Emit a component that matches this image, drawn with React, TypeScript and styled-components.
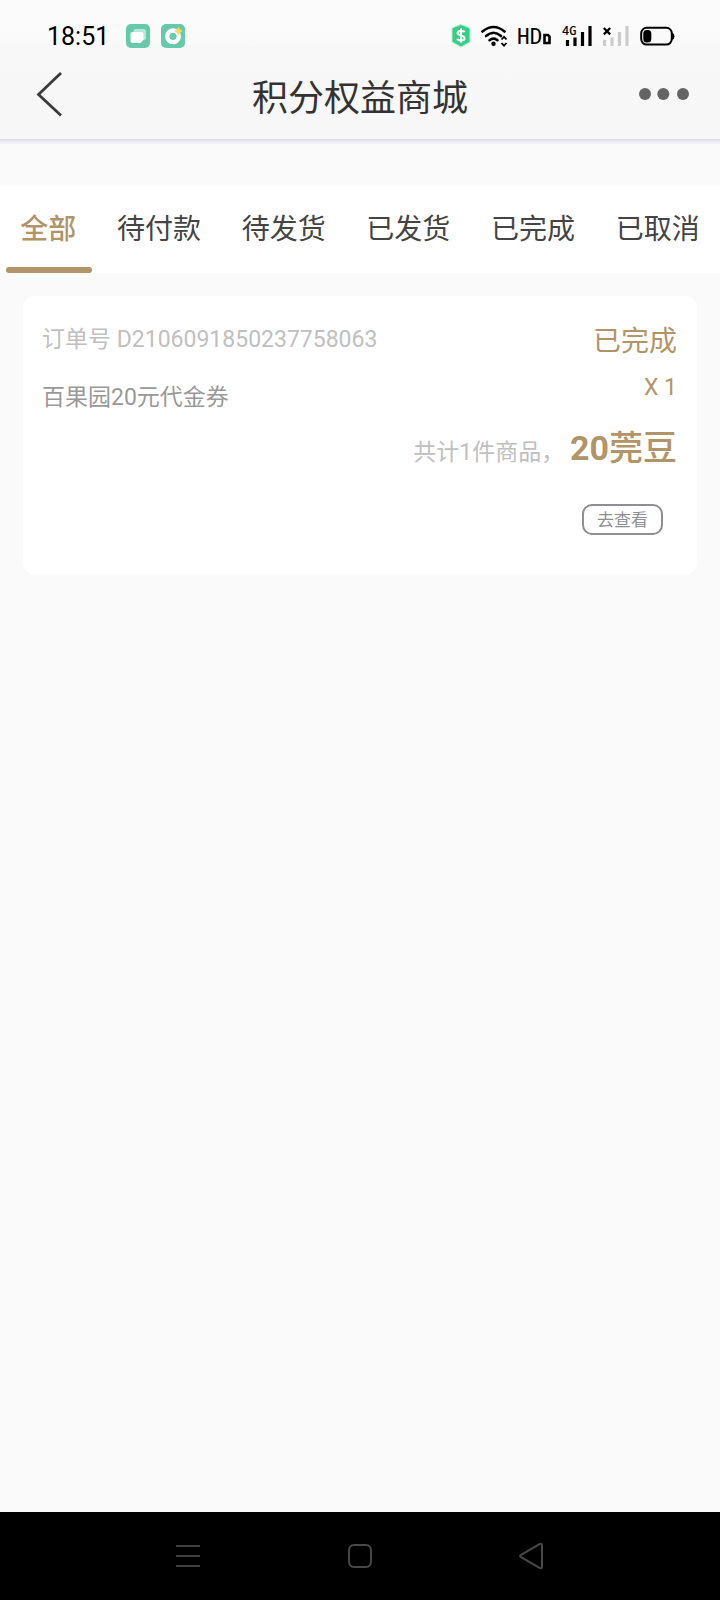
import React from "react";
import styled, { createGlobalStyle } from "styled-components";

const gold = "#b19467";

const GlobalStyle = createGlobalStyle`
  *, *::before, *::after { box-sizing: border-box; }
  body {
    margin: 0;
    background: #fafafa;
    font-family: Roboto, "Noto Sans CJK SC", sans-serif;
  }
  button { font: inherit; border: 0; padding: 0; background: none; cursor: pointer; }
  h1, p { margin: 0; font-weight: 400; }
  svg { display: block; flex: none; }
`;

const Screen = styled.div`
  display: flex;
  flex-direction: column;
  min-height: 100vh;
`;

const TopArea = styled.header`
  background: linear-gradient(#fbfbfb, #fafafa 45px, #f8f8f8 45px, #f7f7f7);
`;

const StatusBar = styled.div`
  display: flex;
  align-items: center;
  justify-content: space-between;
  padding: 24px 45px 0 47px;
  height: 48px;
  color: #000;
`;

const StatusGroup = styled.div<{ $gap: number }>`
  display: flex;
  align-items: center;
  gap: ${(p) => p.$gap}px;
`;

const Clock = styled.span`
  padding-top: 2px;
  font-size: 25px;
  line-height: 24px;
  margin-right: 6px;
`;

const TitleBar = styled.div`
  display: grid;
  grid-template-columns: 1fr auto 1fr;
  align-items: center;
  height: 91px;
  padding: 0 31px;
`;

const Title = styled.h1`
  padding-top: 10px;
  font-size: 36px;
  line-height: 48px;
  color: #333;
`;

const IconButton = styled.button<{ $end?: boolean }>`
  justify-self: ${(p) => (p.$end ? "end" : "start")};
`;

const BackButton = styled(IconButton)`
  padding-left: 5px;
`;

const HeaderShadow = styled.div`
  height: 5px;
  background: linear-gradient(#dad9de, #efeef4 60%, #f3f2f8);
`;

const Tabs = styled.nav`
  display: flex;
  height: 88px;
  margin-top: 41px;
  background: #fff;
`;

const Tab = styled.button<{ $active?: boolean }>`
  position: relative;
  flex: 1 1 auto;
  padding-top: 2px;
  font-size: 28px;
  line-height: 40px;
  white-space: nowrap;
  color: ${(p) => (p.$active ? gold : "#444")};
  font-weight: ${(p) => (p.$active ? 500 : 400)};

  &::after {
    content: "";
    display: ${(p) => (p.$active ? "block" : "none")};
    position: absolute;
    left: 6px;
    right: 5px;
    bottom: 0;
    height: 6px;
    border-radius: 3px;
    background: ${gold};
  }
`;

const Content = styled.main`
  flex: 1;
  padding: 23px;
`;

const Card = styled.article`
  padding: 21px 20px 40px 19px;
  border-radius: 12px;
  background: #fff;
`;

const CardTop = styled.div`
  display: flex;
  justify-content: space-between;
`;

const Column = styled.div<{ $end?: boolean }>`
  display: flex;
  flex-direction: column;
  align-items: ${(p) => (p.$end ? "flex-end" : "flex-start")};
  gap: ${(p) => (p.$end ? 0 : 12)}px;
  padding-top: ${(p) => (p.$end ? 2 : 0)}px;
`;

const Line = styled.p<{ $color: string; $large?: boolean }>`
  font-size: ${(p) => (p.$large ? 28 : 23)}px;
  line-height: 46px;
  color: ${(p) => p.$color};
`;

const Total = styled.p`
  padding-top: 4px;
  text-align: right;
  font-size: 23px;
  line-height: 56px;
  color: #c0c0c0;
`;

const Price = styled.strong`
  font-size: 34px;
  line-height: 40px;
  font-weight: 700;
  color: ${gold};
`;

const Unit = styled.span`
  font-weight: 500;
`;

const Actions = styled.div`
  display: flex;
  justify-content: flex-end;
  margin-top: 23px;
  padding-right: 14px;
`;

const ViewButton = styled.button`
  height: 31px;
  padding: 2px 13px 0;
  border: 2px solid #8e8e93;
  border-radius: 10px;
  font-size: 17px;
  line-height: 25px;
  color: #8e8e93;
`;

const SystemNav = styled.footer`
  display: flex;
  align-items: center;
  justify-content: center;
  gap: 146px;
  height: 88px;
  background: #000;
`;

const indicatorFont = '"DejaVu Sans Mono", monospace';

const CardsAppIcon = () => (
  <svg width="24" height="24" viewBox="0 0 24 24">
    <rect width="24" height="24" rx="5" fill="#65c9aa" />
    <rect x="7.500" y="5" width="12.500" height="11" rx="2" fill="#b8e8d8" />
    <path d="M6.500 8H15.500Q17.500 8 17.500 10V16L14.500 19H6.500Q4.500 19 4.500 17V10Q4.500 8 6.500 8Z" fill="#fff" />
  </svg>
);

const RingAppIcon = () => (
  <svg width="24" height="24" viewBox="0 0 24 24">
    <rect width="24" height="24" rx="5" fill="#65c9aa" />
    <circle cx="12" cy="12.300" r="5.800" fill="none" stroke="#fff" strokeWidth="4.400" />
    <path d="M17.500 3.500L18.700 5.800L21 7L18.700 8.200L17.500 10.500L16.300 8.200L14 7L16.300 5.800Z" fill="#f5dc52" stroke="#f5dc52" />
  </svg>
);

const ShieldIcon = () => (
  <svg width="20" height="24" viewBox="0 0 20 24">
    <path d="M10 .5L19 4V18L10 23L1 18V4Z" fill="#36cf86" stroke="#b9efd5" />
    <path d="M13.600 8.200C13 6.600 6.600 5.900 6.600 9C6.600 12.200 13.600 10.700 13.600 14.200C13.600 17.400 7 17 6.300 14.700M10 4.500V18.500" fill="none" stroke="#fff" strokeWidth="2" />
  </svg>
);

const WifiIcon = () => (
  <svg width="27" height="22" viewBox="0 0 27 22">
    <g fill="none" stroke="#000" strokeWidth="2.600" strokeLinecap="round">
      <path d="M1.500 6.500Q12.500 -2.500 23.500 6.500" />
      <path d="M5 11Q12.500 4.500 20 11" />
      <path d="M8.500 15.200Q12.500 12 16.500 15.200" />
    </g>
    <circle cx="12.500" cy="18.800" r="2.200" />
    <path d="M20.500 14.500L23 11.800L25.500 14.500M20.500 18L23 20.700L25.500 18" fill="none" stroke="#000" strokeWidth="1.800" />
  </svg>
);

const HdIcon = () => (
  <svg width="34" height="30" viewBox="0 -4 34 30">
    <text x="-1" y="19" fontFamily={indicatorFont} fontSize="21">HD</text>
    <path d="M26.500 10H30L31.500 11.500V18H26.500Z" fill="none" stroke="#000" strokeWidth="2.600" />
  </svg>
);

const Bars = ({ color }: { color: string }) => (
  <g stroke={color} strokeWidth="3.200">
    <path d="M5.500 15V21M13 12.500V21M20.500 7V21M28 1V21" />
  </g>
);

const SignalIcon = () => (
  <svg width="30" height="30" viewBox="0 -4 30 30">
    <text x="0" y="10" fontFamily={indicatorFont} fontSize="12" stroke="#000" strokeWidth=".2">4G</text>
    <Bars color="#000" />
  </svg>
);

const NoSignalIcon = () => (
  <svg width="28" height="22" viewBox="3 0 28 22">
    <Bars color="#cbcbcb" />
    <path d="M4.800 3L11.200 9.400M11.200 3L4.800 9.400" stroke="#000" strokeWidth="2.200" />
  </svg>
);

const BatteryIcon = () => (
  <svg width="35" height="20" viewBox="0 0 35 20">
    <rect x="1.200" y="1.800" width="30.600" height="16.800" rx="5.500" fill="none" stroke="#000" strokeWidth="2" />
    <rect x="3.300" y="4" width="8" height="12.400" rx="3.500" />
    <path d="M32 6.500Q34.500 7.500 34.500 10.200T32 14Z" />
  </svg>
);

const tabs = ["全部", "待付款", "待发货", "已发货", "已完成", "已取消"];

export default function App() {
  return (
    <Screen>
      <GlobalStyle />
      <TopArea>
        <StatusBar>
          <StatusGroup $gap={11}>
            <Clock>18:51</Clock>
            <CardsAppIcon />
            <RingAppIcon />
          </StatusGroup>
          <StatusGroup $gap={10}>
            <ShieldIcon />
            <WifiIcon />
            <HdIcon />
            <SignalIcon />
            <NoSignalIcon />
            <BatteryIcon />
          </StatusGroup>
        </StatusBar>
        <TitleBar>
          <BackButton aria-label="返回">
            <svg width="28" height="46" viewBox="0 0 28 46">
              <path d="M25 2L2.500 23.500L25 44.500" fill="none" stroke="#3a3a3a" strokeWidth="2.800" />
            </svg>
          </BackButton>
          <Title>积分权益商城</Title>
          <IconButton $end aria-label="更多">
            <svg width="50" height="12" viewBox="0 0 50 12" fill="#646464">
              <circle cx="6" cy="6" r="6" />
              <circle cx="24.300" cy="6" r="6" />
              <circle cx="44" cy="6" r="6" />
            </svg>
          </IconButton>
        </TitleBar>
        <HeaderShadow />
      </TopArea>

      <Tabs>
        {tabs.map((label, i) => (
          <Tab key={label} $active={i === 0}>{label}</Tab>
        ))}
      </Tabs>

      <Content>
        <Card>
          <CardTop>
            <Column>
              <Line $color="#c0c0c0">订单号 D2106091850237758063</Line>
              <Line $color="#999">百果园20元代金券</Line>
            </Column>
            <Column $end>
              <Line $color={gold} $large>已完成</Line>
              <Line $color={gold}>X 1</Line>
            </Column>
          </CardTop>
          <Total>共计1件商品， <Price>20<Unit>莞豆</Unit></Price></Total>
          <Actions>
            <ViewButton>去查看</ViewButton>
          </Actions>
        </Card>
      </Content>

      <SystemNav>
        <IconButton aria-label="最近任务">
          <svg width="26" height="26" viewBox="0 0 26 26">
            <path d="M1 3H25M1 13H25M1 23H25" stroke="#404040" strokeWidth="2" />
          </svg>
        </IconButton>
        <IconButton aria-label="主屏幕">
          <svg width="26" height="26" viewBox="0 0 26 26">
            <rect x="2" y="2" width="22" height="22" rx="5" fill="none" stroke="#484848" strokeWidth="2" />
          </svg>
        </IconButton>
        <IconButton aria-label="返回上一级">
          <svg width="26" height="28" viewBox="0 0 26 28">
            <path d="M2 12.800L20.500 2.200Q23 1 23 3.500V24.500Q23 27 20.500 25.800L2 15.200Q0 14 2 12.800Z" fill="none" stroke="#484848" strokeWidth="2" />
          </svg>
        </IconButton>
      </SystemNav>
    </Screen>
  );
}
